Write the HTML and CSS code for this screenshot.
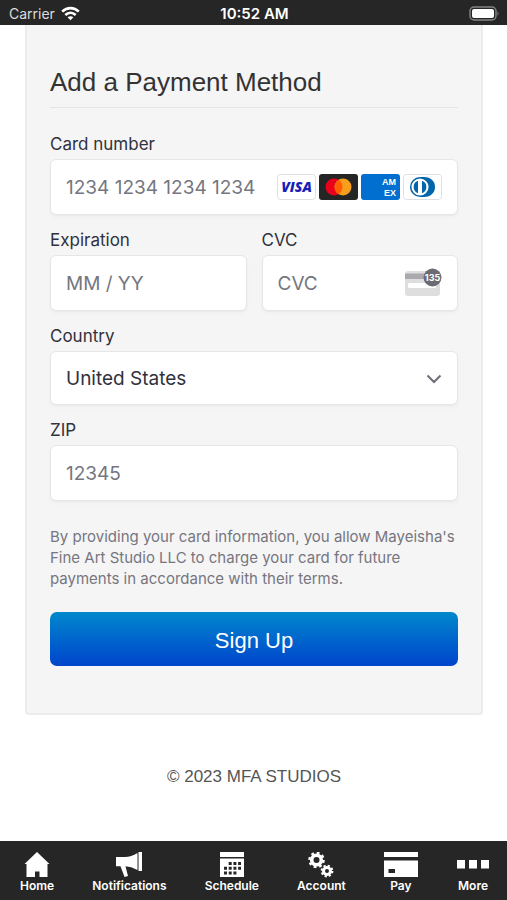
FILE: index.html
```html
<!DOCTYPE html>
<html lang="en">
<head>
<meta charset="utf-8">
<meta name="viewport" content="width=device-width, initial-scale=1">
<title>Add a Payment Method</title>
<link rel="stylesheet" href="styles.css">
</head>
<body>
<header class="status">
  <div class="carrier">
    <span>Carrier</span>
    <svg width="19" height="15" viewBox="0 0 19 15" aria-hidden="true">
      <g fill="none" stroke="#fff" stroke-width="2.6">
        <path d="M1.2 5.6C6 .9 13 .9 17.800 5.600"/>
        <path d="M4.300 9C7.400 6.100 11.600 6.100 14.700 9"/>
      </g>
      <path fill="#fff" d="M6.600 11.200C8.300 9.800 10.700 9.800 12.400 11.200L9.500 14.200Z"/>
    </svg>
  </div>
  <time class="clock">10:52 AM</time>
  <svg class="battery" width="31" height="15" viewBox="0 0 31 15" role="img" aria-label="Battery full">
    <rect x="1" y="1" width="26" height="13" rx="4" fill="#262626" stroke="#858585" stroke-width="1.400"/>
    <rect x="3" y="3" width="22" height="9" rx="2" fill="#fff"/>
    <path d="M28.500 5.200Q30.500 7.500 28.500 9.800Z" fill="#858585"/>
  </svg>
</header>

<main class="content">
  <form class="card">
    <h1>Add a Payment Method</h1>
    <div class="fields">
      <div class="field">
        <label for="number">Card number</label>
        <div class="box">
          <input id="number" type="text" inputmode="numeric" placeholder="1234 1234 1234 1234">
          <div class="brands">
            <svg width="39" height="26" viewBox="0 0 39 26" role="img" aria-label="Visa">
              <rect x=".5" y=".5" width="38" height="25" rx="3" fill="#fff" stroke="#dedfe5"/>
              <text class="visa" x="19.500" y="18" text-anchor="middle">VISA</text>
            </svg>
            <svg width="39" height="26" viewBox="0 0 39 26" role="img" aria-label="Mastercard">
              <rect width="39" height="26" rx="3" fill="#252525"/>
              <circle cx="15" cy="13" r="8.500" fill="#eb001b"/>
              <circle cx="24" cy="13" r="8.500" fill="#f79e1b"/>
              <path d="M19.500 5.800A8.500 8.500 0 0 1 19.500 20.200 8.500 8.500 0 0 1 19.500 5.800Z" fill="#ff5f00"/>
            </svg>
            <svg width="39" height="26" viewBox="0 0 39 26" role="img" aria-label="American Express">
              <rect width="39" height="26" rx="3" fill="#016fd0"/>
              <text class="amex" x="21" y="11">AM</text>
              <text class="amex" x="23" y="22">EX</text>
            </svg>
            <svg width="39" height="26" viewBox="0 0 39 26" role="img" aria-label="Diners Club">
              <rect x=".5" y=".5" width="38" height="25" rx="3" fill="#fff" stroke="#dedfe5"/>
              <path d="M17 3H21C28 3 32 7.500 32 13 32 18.500 28 23 21 23H17Z" fill="#0165ac"/>
              <circle cx="17" cy="13" r="9.300" fill="#fff" stroke="#0165ac" stroke-width="1.500"/>
              <path d="M15 6.800A6.600 6.600 0 0 0 15 19.200ZM19 6.800A6.600 6.600 0 0 1 19 19.200Z" fill="#0165ac"/>
            </svg>
          </div>
        </div>
      </div>
      <div class="pair">
        <div class="field">
          <label for="expiry">Expiration</label>
          <div class="box"><input id="expiry" type="text" placeholder="MM / YY"></div>
        </div>
        <div class="field">
          <label for="cvc">CVC</label>
          <div class="box">
            <input id="cvc" type="text" placeholder="CVC">
            <svg width="38" height="30" viewBox="0 0 38 30" aria-hidden="true">
              <rect x="1" y="3" width="35" height="25" rx="3" fill="#dededf"/>
              <path d="M1 5.500H36V11H1Z" fill="#a9a9ae"/>
              <rect x="4" y="15" width="28" height="5" rx="1.500" fill="#fff"/>
              <circle cx="28.500" cy="9.500" r="9" fill="#6b6b73"/>
              <text class="digits" x="28.500" y="13" text-anchor="middle">135</text>
            </svg>
          </div>
        </div>
      </div>
      <div class="field">
        <label for="country">Country</label>
        <div class="box select-box">
          <select id="country"><option>United States</option></select>
          <svg class="chevron" width="16" height="10" viewBox="0 0 16 10" aria-hidden="true"><path d="M1.500 1.500 8 8 14.500 1.500" fill="none" stroke="#6d6e78" stroke-width="2"/></svg>
        </div>
      </div>
      <div class="field">
        <label for="zip">ZIP</label>
        <div class="box"><input id="zip" type="text" inputmode="numeric" placeholder="12345"></div>
      </div>
    </div>
    <p class="terms">By providing your card information, you allow Mayeisha's Fine Art Studio LLC to charge your card for future payments in accordance with their terms.</p>
    <button class="submit" type="submit">Sign Up</button>
  </form>
  <p class="copyright">© 2023 MFA STUDIOS</p>
</main>

<nav class="tabs">
  <a href="#home">
    <svg width="26" height="26" viewBox="0 0 26 26" aria-hidden="true"><path fill="#fff" d="M13 0 25.500 12H23.500V25H15.500V19.500H11V25H2.500V12H.5Z"/></svg>
    <span>Home</span>
  </a>
  <a href="#notifications">
    <svg width="28" height="26" viewBox="0 0 28 26" aria-hidden="true"><path fill="#fff" d="M1 5H10Q16 5 22.500 1V18Q16 14.500 10.500 14.200L13 24 9.500 25 5.500 14.200H1Z"/><path fill="#fff" d="M23.500 0H27V19H23.500Z"/></svg>
    <span>Notifications</span>
  </a>
  <a href="#schedule">
    <svg width="26" height="26" viewBox="0 0 26 26" aria-hidden="true">
      <path fill="#fff" d="M1 0H25V5H1ZM1 6.500H25V25H1Z"/>
      <path d="M9.700 11.500H22M5 16.200H22M5 20.900H17.400" fill="none" stroke="#262626" stroke-width="3" stroke-dasharray="3 1.700"/>
    </svg>
    <span>Schedule</span>
  </a>
  <a href="#account">
    <svg width="26" height="26" viewBox="0 0 26 26" aria-hidden="true">
      <g fill="none" stroke="#fff">
        <circle cx="8.500" cy="8" r="4.800" stroke-width="3.600"/>
        <circle cx="8.500" cy="8" r="7.100" stroke-width="2.400" stroke-dasharray="2.800 2.776"/>
        <circle cx="19" cy="19" r="3.500" stroke-width="3"/>
        <circle cx="19" cy="19" r="5.400" stroke-width="2" stroke-dasharray="2.200 2.041"/>
      </g>
    </svg>
    <span>Account</span>
  </a>
  <a href="#pay">
    <svg width="34" height="26" viewBox="0 0 34 26" aria-hidden="true"><path fill="#fff" fill-rule="evenodd" d="M0 0H34V5H0ZM0 8.500H34V25H0ZM4.500 17V21H11V17Z"/></svg>
    <span>Pay</span>
  </a>
  <a href="#more">
    <svg width="34" height="26" viewBox="0 0 34 26" aria-hidden="true"><path fill="#fff" d="M1 8H9V16.500H1ZM13 8H21V16.500H13ZM25 8H33V16.500H25Z"/></svg>
    <span>More</span>
  </a>
</nav>
</body>
</html>
```
FILE: styles.css
```css
* { box-sizing: border-box; }

body {
  margin: 0;
  min-height: 100vh;
  display: flex;
  flex-direction: column;
  background: #fff;
  color: #30313d;
  font-family: Inter, "Liberation Sans", sans-serif;
}

svg { display: block; flex: none; }

.status {
  display: grid;
  grid-template-columns: 1fr auto 1fr;
  align-items: center;
  height: 25px;
  padding: 2px 7px 0 9px;
  background: #262626;
  color: #fff;
  font-size: 14px;
}
.carrier { display: flex; align-items: center; gap: 6px; color: #ddd; }
.clock { font-size: 15px; font-weight: 600; line-height: 18px; }
.battery { justify-self: end; }

.content { flex: 1; padding: 0 24px 0 25px; }

.card {
  padding: 41px 23px 47px;
  background: #f5f5f5;
  border: 2px solid #ececec;
  border-top: 0;
  border-radius: 0 0 4px 4px;
}

h1 {
  margin: 0 0 24px;
  padding-bottom: 9px;
  border-bottom: 1px solid #e5e5e5;
  color: #333;
  font: 400 26px/32px "Liberation Sans", sans-serif;
}

.fields { display: flex; flex-direction: column; gap: 13px; }
.pair { display: grid; grid-template-columns: 1fr 1fr; gap: 15px; }
.field { min-width: 0; }

label {
  display: block;
  margin-bottom: 3px;
  font-size: 17px;
  line-height: 24px;
}

.box {
  display: flex;
  align-items: center;
  height: 56px;
  padding: 0 15px;
  background: #fff;
  border: 1px solid #e6e6e6;
  border-radius: 6px;
  box-shadow: 0 1px 2px rgba(0, 0, 0, .04), 0 3px 6px rgba(0, 0, 0, .02);
}
.select-box { height: 54px; padding: 0; position: relative; }

input, select {
  flex: 1;
  min-width: 0;
  height: 100%;
  padding: 0;
  border: 0;
  outline: 0;
  background: transparent;
  color: #30313d;
  font: 400 19px Inter, "Liberation Sans", sans-serif;
}
select { appearance: none; padding: 0 40px 0 15px; }
::placeholder { color: #757680; opacity: 1; }

.brands { display: flex; gap: 3px; }
.visa { fill: #1a1fb8; font: italic 800 14px "Open Sans", sans-serif; }
.amex { fill: #fff; font: 700 9px "Liberation Sans", sans-serif; }
.digits { fill: #fff; font: 700 9px Inter, sans-serif; }
.chevron { position: absolute; right: 15px; top: 22px; pointer-events: none; }

.terms {
  margin: 25px 0 23px;
  color: #757680;
  font-size: 15px;
  line-height: 21px;
}

.submit {
  display: block;
  width: 100%;
  height: 54px;
  padding: 3px 0 0;
  border: 0;
  border-radius: 7px;
  background: linear-gradient(#08c, #04c);
  color: #fff;
  font: 400 22px "Liberation Sans", sans-serif;
}

.copyright {
  margin: 50px 0 0;
  color: #555;
  text-align: center;
  font: 400 17px/24px "Liberation Sans", sans-serif;
}

.tabs {
  display: flex;
  justify-content: space-between;
  height: 59px;
  padding: 11px 17px 0 20px;
  background: #262626;
}
.tabs a {
  display: flex;
  flex-direction: column;
  align-items: center;
  color: #fff;
  text-decoration: none;
  font-size: 12px;
  font-weight: 600;
  line-height: 16px;
}
```
